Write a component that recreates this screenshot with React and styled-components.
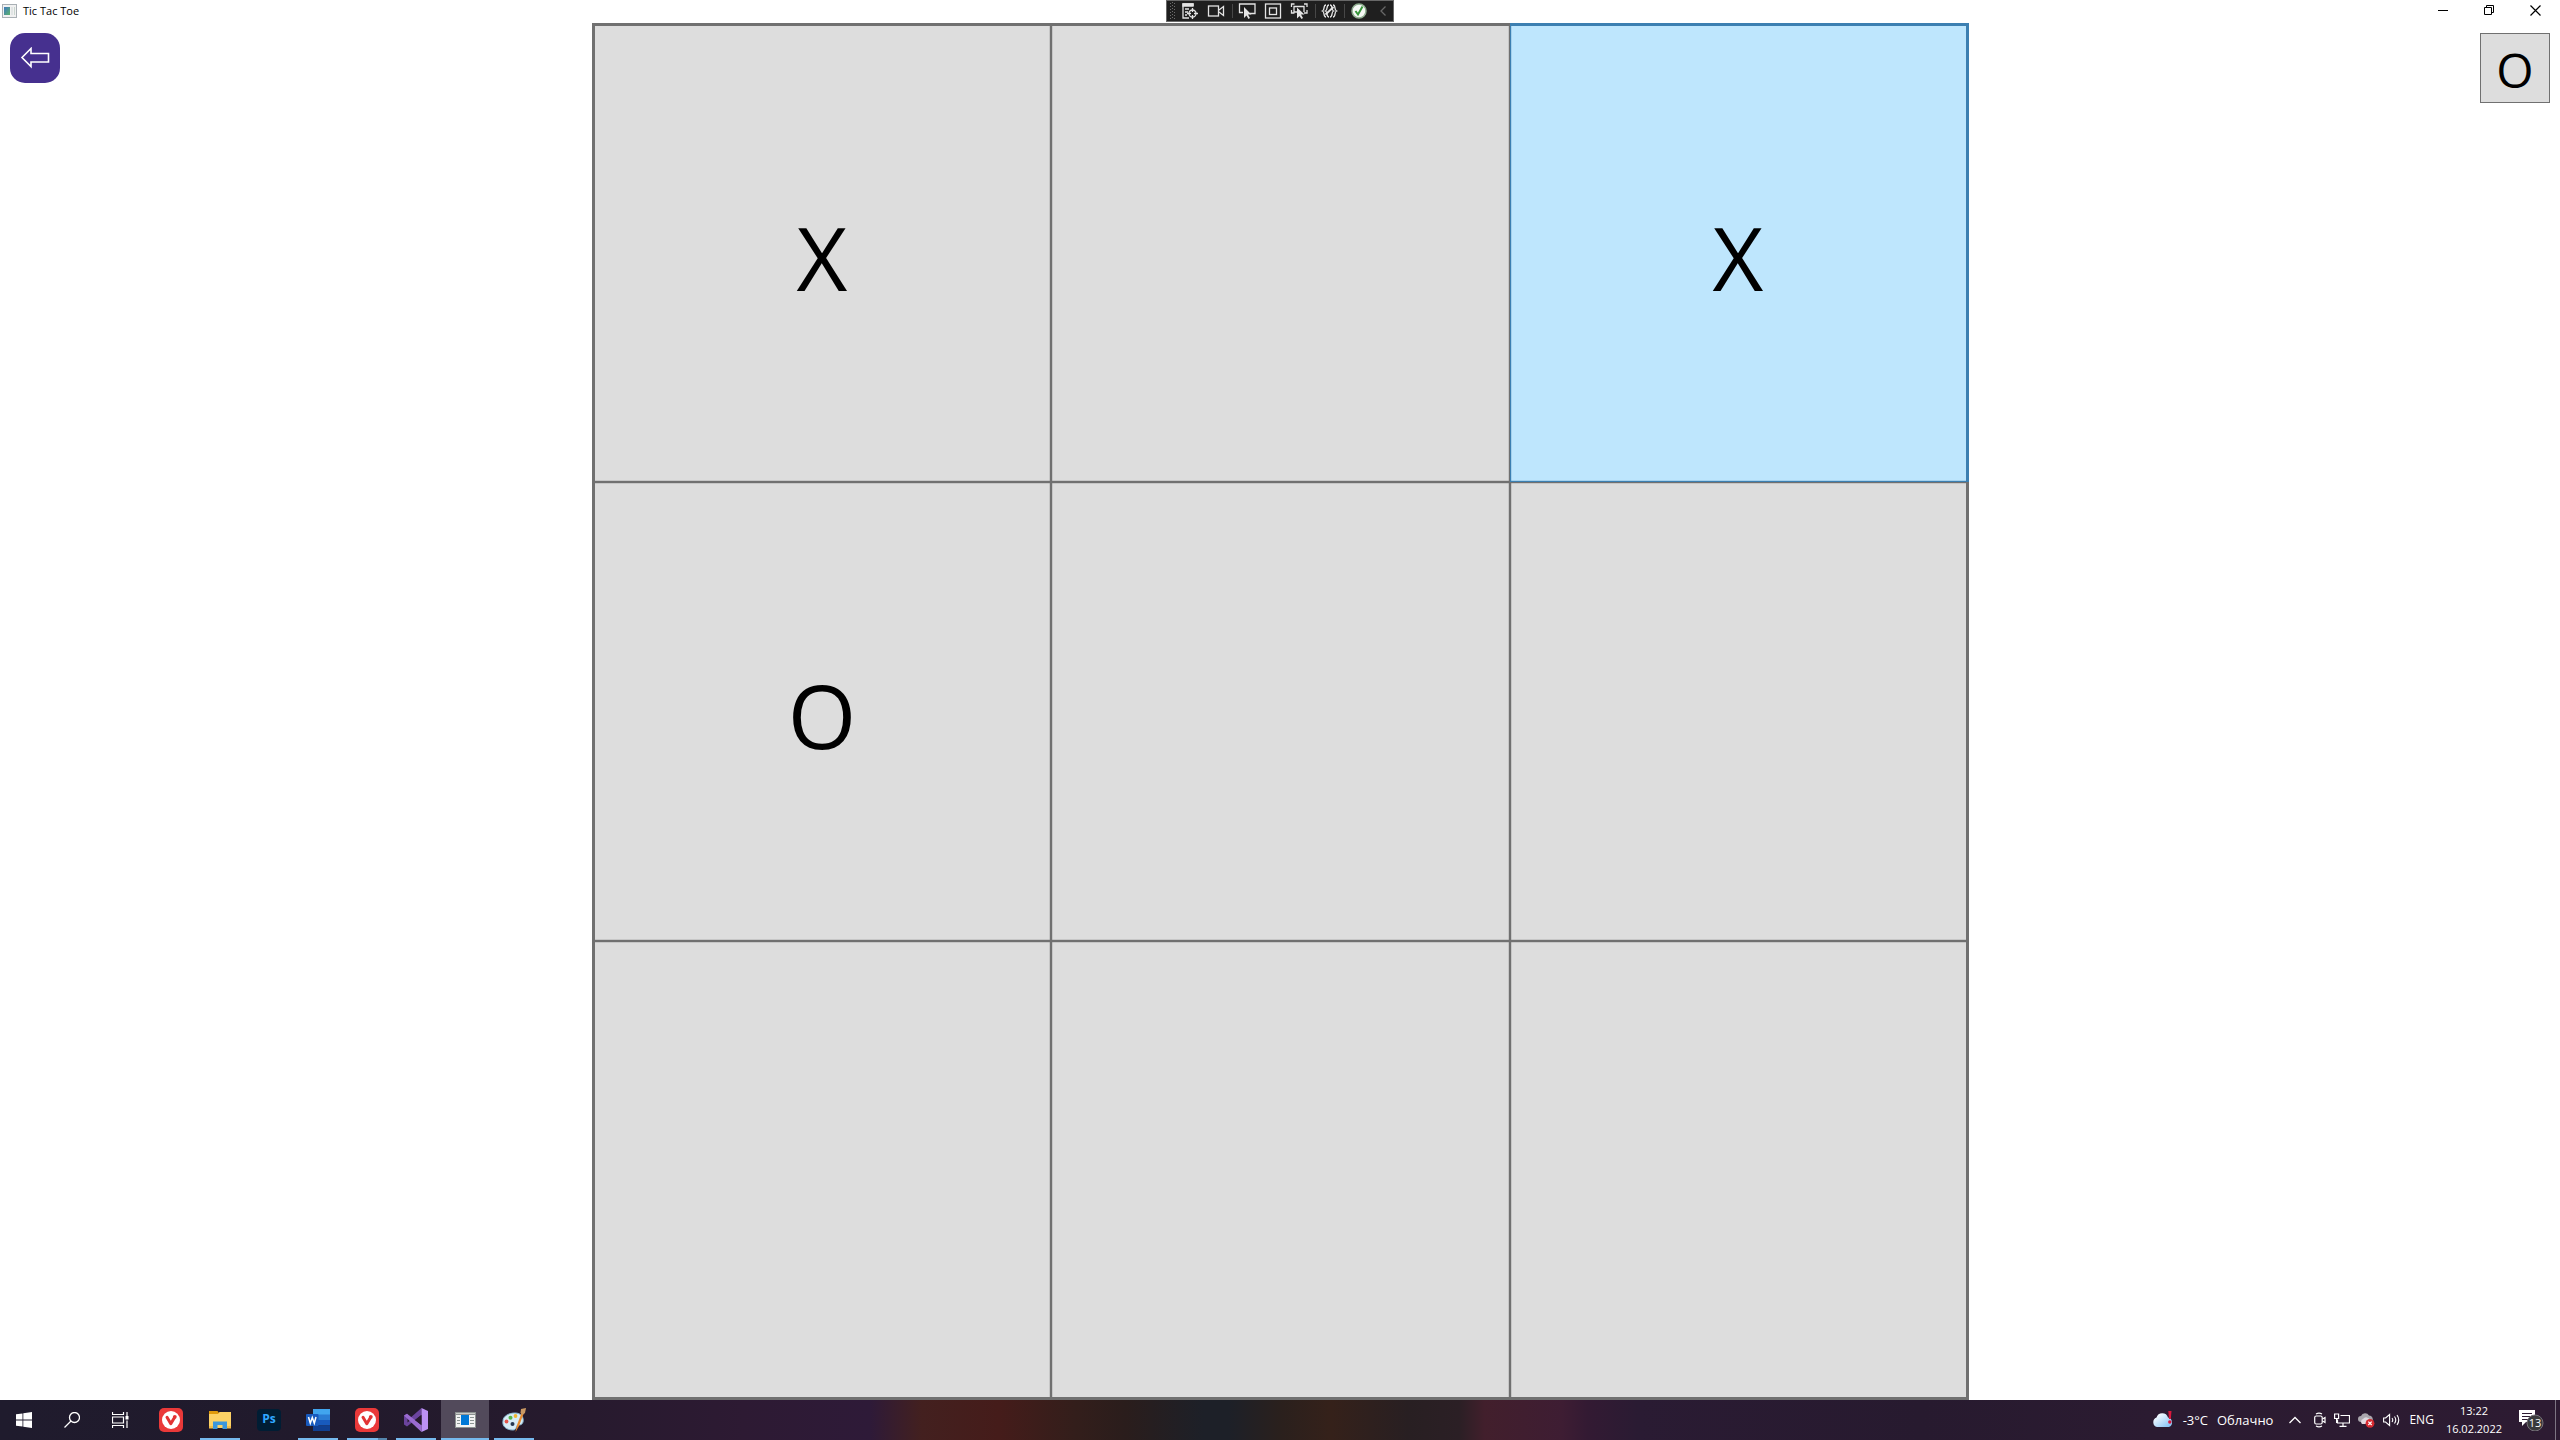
import React, { useState } from "react";
import styled, { createGlobalStyle, css } from "styled-components";

const GlobalStyle = createGlobalStyle`
  *, *::before, *::after { box-sizing: border-box; }
  body {
    margin: 0;
    background: #fff;
    color: #000;
    font-family: "Open Sans", "Noto Sans", sans-serif;
  }
  button {
    margin: 0;
    padding: 0;
    border: 0;
    background: none;
    color: inherit;
    font: inherit;
  }
  svg { display: block; flex: none; }
`;

const Page = styled.div`
  min-height: 100vh;
  display: flex;
  flex-direction: column;
`;

/* ---------- title bar ---------- */

const TitleBar = styled.header`
  height: 23px;
  display: grid;
  grid-template-columns: 1fr auto 1fr;
`;

const TitleGroup = styled.div`
  display: flex;
  align-items: center;
  gap: 6px;
  padding: 0 0 2px 2px;
`;

const Title = styled.h1`
  margin: 0;
  font-size: 11px;
  line-height: 20px;
  font-weight: 400;
`;

const DebugBar = styled.div`
  height: 22px;
  width: 228px;
  border: 1px solid #686868;
  background: #1f1f1f;
`;

const WindowButtons = styled.div`
  display: flex;
  justify-content: flex-end;
  padding-right: 2px;
`;

const WindowButton = styled.button`
  width: 46px;
  height: 20px;
  display: grid;
  place-items: center;
`;

/* ---------- game ---------- */

const Game = styled.main`
  flex: 1;
  display: grid;
  grid-template-columns: 1fr auto 1fr;
`;

const Side = styled.div`
  display: flex;
  align-items: flex-start;
  justify-content: ${(p) => (p.$end ? "flex-end" : "flex-start")};
  padding: 10px;
`;

const BackButton = styled.button`
  width: 50px;
  height: 50px;
  border-radius: 15px;
  background: #46308f;
  display: grid;
  place-items: center;
`;

const Turn = styled.output`
  width: 70px;
  height: 70px;
  padding-top: 4px;
  border: 1px solid #707070;
  background: #ddd;
  display: grid;
  place-items: center;
  font-size: 48px;
  line-height: 64px;
`;

const Board = styled.div`
  width: calc(100vh - 63px);
  aspect-ratio: 1;
  display: grid;
  grid-template: repeat(3, 1fr) / repeat(3, 1fr);
`;

const edge = (outer) => (outer ? "3px" : "1px");

const Cell = styled.button`
  min-width: 0;
  min-height: 0;
  padding-top: 6px;
  display: grid;
  place-items: center;
  font-size: 88px;
  line-height: 120px;
  background: ${(p) => (p.$active ? "#bee6fd" : "#ddd")};
  border-style: solid;
  border-color: ${(p) => (p.$active ? "#3c7fb1" : "#707070")};
  border-width: ${(p) =>
    [p.$row === 0, p.$col === 2, p.$row === 2, p.$col === 0].map(edge).join(" ")};
  box-shadow: ${(p) => {
    const tint = p.$active ? "rgba(60,127,177,.2)" : "rgba(112,112,112,.2)";
    const sides = [];
    if (p.$row > 0) sides.push(`inset 0 1px ${tint}`);
    if (p.$row < 2) sides.push(`inset 0 -1px ${tint}`);
    if (p.$col > 0) sides.push(`inset 1px 0 ${tint}`);
    if (p.$col < 2) sides.push(`inset -1px 0 ${tint}`);
    return sides.join(", ");
  }};
`;

/* ---------- taskbar ---------- */

const Taskbar = styled.footer`
  height: 40px;
  display: flex;
  justify-content: space-between;
  color: #fff;
  background: linear-gradient(
    90deg,
    #1f1b2d 0%,
    #211a2c 12%,
    #261a2d 22%,
    #2d1a33 29%,
    #2e1a38 34%,
    #43201f 36%,
    #451c1a 39%,
    #331e1b 42%,
    #2a1d1c 44%,
    #1d2028 47%,
    #1d2028 48%,
    #2a201d 50%,
    #35211a 52%,
    #281f22 55%,
    #2b1f25 57%,
    #421f2c 58%,
    #3e1d33 61%,
    #331a33 62%,
    #2a1b33 64%,
    #271a2f 75%,
    #2b1b31 84%,
    #2d1b32 100%
  );
`;

const SystemButtons = styled.div`
  display: flex;
`;

const Apps = styled.nav`
  display: flex;
  gap: 1px;
  padding-left: 3px;
`;

const TaskGroup = styled.div`
  display: flex;
`;

const TaskButton = styled.button`
  width: 48px;
  height: 40px;
  display: grid;
  place-items: center;
  background: ${(p) => (p.$active ? "#524a5b" : "transparent")};
  ${(p) =>
    p.$open &&
    css`
      background-image: linear-gradient(
        90deg,
        #76b9ed ${p.$stacked ? "31px" : "48px"},
        #5586ad ${p.$stacked ? "31px" : "48px"}
      );
      background-repeat: no-repeat;
      background-position: center bottom;
      background-size: ${p.$active ? "48px" : "40px"} 2px;
    `}
`;

const Tray = styled.div`
  display: flex;
  align-items: center;
`;

const Weather = styled.button`
  display: flex;
  align-items: center;
  gap: 9px;
  margin-right: 16px;
  font-size: 13px;
  line-height: 20px;
`;

const TrayIcons = styled.div`
  display: flex;
  align-items: center;
  gap: 8px;
`;

const TrayButton = styled.button`
  height: 40px;
  display: grid;
  place-items: center;
`;

const OverflowButton = styled(TrayButton)`
  margin-right: 13px;
`;

const Language = styled.button`
  padding: 0 12px 0 9px;
  font-size: 12px;
  line-height: 20px;
`;

const Clock = styled.time`
  display: flex;
  flex-direction: column;
  align-items: center;
  font-size: 11px;
  line-height: 18px;
`;

const Notifications = styled.button`
  margin: 0 11px 0 17px;
`;

const ShowDesktop = styled.button`
  width: 5px;
  height: 40px;
  border-left: 1px solid #7d7482;
`;

/* ---------- drawings ---------- */

const AppIcon = () => (
  <svg width="15" height="14" viewBox="0 0 15 14">
    <defs>
      <linearGradient id="appScreen" x1="0" y1="0" x2="1" y2="1">
        <stop offset="0" stopColor="#3f78c0" />
        <stop offset="1" stopColor="#5bb36a" />
      </linearGradient>
    </defs>
    <rect x=".5" y=".5" width="14" height="13" fill="#f1f1f1" stroke="#a9b0b5" />
    <rect x="2" y="3" width="6" height="8" fill="url(#appScreen)" />
    <rect x="9" y="3" width="2" height="8" fill="#e0e4e4" />
    <rect x="12" y="3" width="1" height="8" fill="#c9d6cf" />
  </svg>
);

const DebugIcons = () => (
  <svg width="225" height="20" viewBox="1 1 225 20" fill="none" stroke="#e4e4e4">
    <g fill="#6d6d6d" stroke="none">
      {[3, 6, 9, 12, 15, 18].map((y) => (
        <g key={y}>
          <rect x="4" y={y} width="1" height="1" />
          <rect x="8" y={y} width="1" height="1" />
          <rect x="6" y={y - 1} width="1" height="1" />
        </g>
      ))}
    </g>
    <g strokeWidth="1.3">
      <path d="M27 6V4H17v14h6M17 5h10M19 9h4M19 12h3M19 15h2" />
      <path d="M17 4h10v2H17z" fill="#e4e4e4" />
      <circle cx="26.5" cy="13.5" r="3.5" />
      <path d="M26.5 8v4M26.5 15v4M21 13.5h4M28 13.5h4" />
      <rect x="42.5" y="6" width="10" height="10" />
      <path d="M53 10l4.5-3.500v9L53 12" />
      <path d="M77 12.500h-3.500V4H89v9.500h-5" />
      <path d="M78 7v11l2.500-2.500 2 3.500 1.500-1-2-3.500h3.500z" fill="#e4e4e4" stroke="none" />
      <rect x="99.5" y="4" width="15" height="14" />
      <rect x="103.500" y="8" width="7" height="6.500" />
      <path d="M125.500 7V4h3M138 4h3v3M125.500 10v3h3M141 10v3h-3M131 12h-3V6.500h10V12" />
      <path d="M131 7.500v11l2.500-2.500 2 3 1.500-1-2-3.500h3.500z" fill="#e4e4e4" stroke="none" />
      <path d="M160 5c-3 0-1 5-3.500 6 2.500 1 .5 6 3.500 6M163 5c-3 0-1 5-3.500 6 2.500 1 .5 6 3.500 6M167 5c3 0 1 5 3.500 6-2.500 1-.5 6-3.500 6M164 5c3 0 1 5 3.500 6-2.500 1-.5 6-3.500 6" />
      <path d="M159.500 14.500l8-7.500" strokeWidth="1.800" />
    </g>
    <path d="M66.500 4v14M149.500 4v14M178.500 4v14" stroke="#474747" />
    <circle cx="193" cy="11" r="7" fill="#f5f8f5" stroke="#8fae90" strokeWidth="1.5" />
    <path d="M189.500 11l2.500 3.500 4.500-8" stroke="#36963a" strokeWidth="2" />
    <path d="M219.500 6.500L215 11l4.500 4.500" stroke="#686868" strokeWidth="1.3" />
  </svg>
);

const MinimizeIcon = () => (
  <svg width="10" height="10" stroke="#000"><path d="M0 5.500h10" /></svg>
);
const RestoreIcon = () => (
  <svg width="10" height="10" fill="none" stroke="#000">
    <path d="M.5 2.500h7v7h-7zM2.500 2.500v-2h7v7h-2" />
  </svg>
);
const CloseIcon = () => (
  <svg width="11" height="11" fill="none" stroke="#000" strokeWidth="1.2"><path d="M.5.500l10 10M10.500.500l-10 10" /></svg>
);

const BackArrow = () => (
  <svg width="30" height="22" viewBox="0 0 30 22" fill="none" stroke="#fff" strokeWidth="1.6">
    <path d="M2 10.500L11 1.500V6.500H28.500V15H11V19.500z" />
  </svg>
);

const WindowsLogo = () => (
  <svg width="16" height="16" viewBox="0 0 16 16" fill="#fff">
    <path d="M0 2.300L6.500 1.400V7.600H0zM7.300 1.300L16 0v7.600H7.300zM0 8.400h6.500v6.200L0 13.700zM7.300 8.400H16V16l-8.700-1.300z" />
  </svg>
);
const SearchIcon = () => (
  <svg width="16" height="16" viewBox="0 0 16 16" fill="none" stroke="#fff" strokeWidth="1.3">
    <circle cx="10.500" cy="5.500" r="5" /><path d="M7 9L.5 15.500" />
  </svg>
);
const TaskViewIcon = () => (
  <svg width="17" height="16" viewBox="0 0 17 16" fill="none" stroke="#fff" strokeWidth="1.2">
    <path d="M.5 0v2.500h11V0M.5 5h11v6H.5zM.5 16v-2.500h11V16M15 0v4M15 8.500V16" />
    <rect x="13.500" y="4" width="3" height="3.500" fill="#fff" stroke="none" />
  </svg>
);
const VivaldiIcon = () => (
  <svg width="24" height="24" viewBox="0 0 24 24">
    <rect width="24" height="24" rx="5" fill="#ea3939" />
    <circle cx="12" cy="12" r="9" fill="#fff" />
    <path d="M8 9.200l3.800 6.600 3.700-6.300" fill="none" stroke="#e23434" strokeWidth="3" strokeLinecap="round" strokeLinejoin="round" />
    <circle cx="15.800" cy="8.800" r="1.900" fill="#e23434" />
  </svg>
);
const FolderIcon = () => (
  <svg width="22" height="18" viewBox="0 0 22 18">
    <path d="M0 0h8.500l1.500 2v3H0z" fill="#e09a0b" />
    <path d="M0 3h9l1.500-2H22v16H0z" fill="#fdd265" />
    <path d="M4 18v-7.500h14V18h-4.500v-4h-5v4z" fill="#3c97dc" />
    <path d="M0 15h4v2.500H0zM18 15h4v2.500h-4z" fill="#f3bd48" />
  </svg>
);
const PsText = styled.span`
  width: 24px;
  height: 22px;
  border-radius: 4px;
  background: #001d34;
  color: #31a8ff;
  font-size: 12px;
  line-height: 20px;
  font-weight: 700;
  text-align: center;
`;
const WordIcon = () => (
  <svg width="24" height="22" viewBox="0 0 24 22">
    <rect x="7" width="17" height="6" fill="#41a5ee" />
    <rect x="7" y="5.500" width="17" height="5.500" fill="#2b7cd3" />
    <rect x="7" y="11" width="17" height="5.500" fill="#185abd" />
    <rect x="7" y="16.500" width="17" height="5.500" fill="#103f91" />
    <rect y="5" width="12.500" height="12" rx="1" fill="#185abd" />
    <path d="M2.500 8l1.800 6.200L6.300 8.500l2 5.700L10 8" fill="none" stroke="#fff" strokeWidth="1.5" />
  </svg>
);
const VisualStudioIcon = () => (
  <svg width="24" height="24" viewBox="0 0 24 24">
    <path d="M0 7.500L3 5.800l4 3.400L17.500 0v6.700L3 18.500 0 16.500z" fill="#6b449e" />
    <path d="M3.500 9.500v5l3-2.500z" fill="#261a2d" />
    <path d="M0 7.500l3-1.700L17.500 17.300V24L2 9.500z" fill="#9a6bd0" />
    <path d="M17.500 0L24 3v18l-6.500 3z" fill="#bd91f5" />
    <path d="M17.500 7v10L11 12z" fill="#261a2d" />
  </svg>
);
const GameWindowIcon = () => (
  <svg width="21" height="16" viewBox="0 0 21 16">
    <rect width="21" height="16" fill="#8c9291" />
    <rect x="1" y="1" width="19" height="1" fill="#c9c9c9" />
    <rect x="1" y="3" width="19" height="12" fill="#f3f3f3" />
    <rect x="6" y="3" width="8" height="10" fill="#0078d7" />
    <path d="M2 5.500h3M2 8.500h3M2 11.500h3M15 5.500h4M15 8.500h4M15 11.500h4" stroke="#8b9493" />
  </svg>
);
const PaintIcon = () => (
  <svg width="25" height="24" viewBox="0 0 25 24">
    <path d="M1 13C1 8 7 5 13 5c6 0 9 4 8 9-1 3-3 3-5 3s-1 5-5 5C4 22 0 18 1 13z" fill="#d7edf7" stroke="#8dbcd5" />
    <circle cx="4.500" cy="13.500" r="1.900" fill="#e2574c" />
    <circle cx="8.500" cy="9.800" r="2" fill="#55b649" />
    <circle cx="13.500" cy="8" r="1.900" fill="#f2b632" />
    <circle cx="10.500" cy="16" r="2" fill="#263850" />
    <path d="M13.500 24l1.500-7L19.500 5l2 1L17 18z" fill="#e78b2f" />
    <path d="M18.500 5l.5-4 5-1-1 5-2.500 2z" fill="#c99863" />
  </svg>
);
const WeatherIcon = () => (
  <svg width="22" height="18" viewBox="0 0 22 18">
    <defs>
      <linearGradient id="cloudFill" x1="0" y1="0" x2="1" y2="1">
        <stop offset=".2" stopColor="#f3faff" /><stop offset="1" stopColor="#78bdf4" />
      </linearGradient>
    </defs>
    <path d="M5 16a5 5 0 0 1-.5-9.500A6 6 0 0 1 16 6.500 5 5 0 0 1 17 16z" fill="url(#cloudFill)" />
    <path d="M16.300 0h3.200l-.7 8H17z" fill="#d9183c" /><circle cx="17.800" cy="11" r="1.700" fill="#d9183c" />
  </svg>
);
const ChevronUp = () => (
  <svg width="12" height="8" fill="none" stroke="#fff" strokeWidth="1.3"><path d="M.5 7L6 1.500 11.500 7" /></svg>
);
const MeetIcon = () => (
  <svg width="12" height="16" viewBox="0 0 12 16" fill="none" stroke="#fff" strokeWidth="1.2">
    <rect x=".7" y="4" width="7.500" height="8" rx="1.5" />
    <path d="M8.500 7l2.500-1.500v5L8.500 9M2 2Q5 .2 8 2M2 14Q5 15.800 8 14" />
  </svg>
);
const NetworkIcon = () => (
  <svg width="16" height="14" viewBox="0 0 16 14" fill="none" stroke="#fff" strokeWidth="1.2">
    <path d="M6.500 2.500h9v7.500H3.500V6.500M9 10v3M5.500 13.300h7M.6 1h4v4.500h-4zM2.600 5.500V10" />
  </svg>
);
const CloudErrorIcon = () => (
  <svg width="17" height="15" viewBox="0 0 17 15">
    <path d="M3 9a3 3 0 0 1 0-6 4.500 4.500 0 0 1 8-.5A4 4 0 0 1 14 9z" fill="#aaa6ad" />
    <path d="M4 11a3 3 0 0 1 1-5 4 4 0 0 1 7 1v4z" fill="#ded9df" />
    <circle cx="12" cy="10.300" r="4.400" fill="#d52a31" />
    <path d="M10.300 8.600l3.400 3.400M13.700 8.600L10.300 12" stroke="#fff" strokeWidth="1.2" />
  </svg>
);
const VolumeIcon = () => (
  <svg width="17" height="14" viewBox="0 0 17 14" fill="none" stroke="#fff" strokeWidth="1.1">
    <path d="M.6 5v4h2l4 3.500v-11L2.600 5zM9 5q1.500 2 0 4M11.500 3.500q2.500 3.500 0 7M14 2q3.500 5 0 10" />
  </svg>
);
const NotificationsIcon = () => (
  <svg width="25" height="22" viewBox="0 0 25 22">
    <path d="M0 1h16v12H7l-4 4v-4H0z" fill="#fff" />
    <path d="M3 4.500h10M3 7.500h10M3 10.500h6" stroke="#2d1b32" />
    <circle cx="16" cy="14" r="8" fill="#3a3a3c" stroke="#77727a" />
    <text x="16" y="18" fill="#fff" fontSize="11" textAnchor="middle" fontFamily="Open Sans, sans-serif">13</text>
  </svg>
);

/* ---------- data ---------- */

const START_CELLS = ["X", "", "X", "O", "", "", "", "", ""];

const SYSTEM = [
  { name: "Start", icon: <WindowsLogo /> },
  { name: "Search", icon: <SearchIcon /> },
  { name: "Task View", icon: <TaskViewIcon /> },
];

const APPS = [
  { name: "Vivaldi", icon: <VivaldiIcon /> },
  { name: "Explorer", icon: <FolderIcon />, open: true },
  { name: "Photoshop", icon: <PsText>Ps</PsText> },
  { name: "Word", icon: <WordIcon />, open: true },
  { name: "Vivaldi windows", icon: <VivaldiIcon />, open: true, stacked: true },
  { name: "Visual Studio", icon: <VisualStudioIcon />, open: true },
  { name: "Tic Tac Toe", icon: <GameWindowIcon />, open: true, active: true },
  { name: "Paint", icon: <PaintIcon />, open: true },
];

export default function App() {
  const [cells, setCells] = useState(START_CELLS);
  const [turn, setTurn] = useState("O");
  const [active, setActive] = useState(2);

  const play = (index) => {
    setActive(index);
    if (cells[index]) return;
    setCells(cells.map((mark, i) => (i === index ? turn : mark)));
    setTurn(turn === "O" ? "X" : "O");
  };

  return (
    <Page>
      <GlobalStyle />
      <TitleBar>
        <TitleGroup>
          <AppIcon />
          <Title>Tic Tac Toe</Title>
        </TitleGroup>
        <DebugBar><DebugIcons /></DebugBar>
        <WindowButtons>
          <WindowButton aria-label="Minimize"><MinimizeIcon /></WindowButton>
          <WindowButton aria-label="Restore"><RestoreIcon /></WindowButton>
          <WindowButton aria-label="Close"><CloseIcon /></WindowButton>
        </WindowButtons>
      </TitleBar>

      <Game>
        <Side>
          <BackButton aria-label="Back"><BackArrow /></BackButton>
        </Side>
        <Board>
          {cells.map((mark, i) => (
            <Cell
              key={i}
              $row={Math.floor(i / 3)}
              $col={i % 3}
              $active={i === active}
              aria-label={`Cell ${i + 1} ${mark}`}
              onClick={() => play(i)}
            >
              {mark}
            </Cell>
          ))}
        </Board>
        <Side $end>
          <Turn>{turn}</Turn>
        </Side>
      </Game>

      <Taskbar>
        <TaskGroup>
          <SystemButtons>
            {SYSTEM.map((item) => (
              <TaskButton key={item.name} aria-label={item.name}>{item.icon}</TaskButton>
            ))}
          </SystemButtons>
          <Apps>
            {APPS.map((app) => (
              <TaskButton
                key={app.name}
                aria-label={app.name}
                $open={app.open}
                $active={app.active}
                $stacked={app.stacked}
              >
                {app.icon}
              </TaskButton>
            ))}
          </Apps>
        </TaskGroup>
        <Tray>
          <Weather>
            <WeatherIcon />
            <span>-3°C</span>
            <span>Облачно</span>
          </Weather>
          <OverflowButton aria-label="Hidden icons"><ChevronUp /></OverflowButton>
          <TrayIcons>
            <TrayButton aria-label="Meet now"><MeetIcon /></TrayButton>
            <TrayButton aria-label="Network"><NetworkIcon /></TrayButton>
            <TrayButton aria-label="OneDrive"><CloudErrorIcon /></TrayButton>
            <TrayButton aria-label="Volume"><VolumeIcon /></TrayButton>
          </TrayIcons>
          <Language>ENG</Language>
          <Clock>
            <span>13:22</span>
            <span>16.02.2022</span>
          </Clock>
          <Notifications aria-label="Notifications"><NotificationsIcon /></Notifications>
          <ShowDesktop aria-label="Show desktop" />
        </Tray>
      </Taskbar>
    </Page>
  );
}
